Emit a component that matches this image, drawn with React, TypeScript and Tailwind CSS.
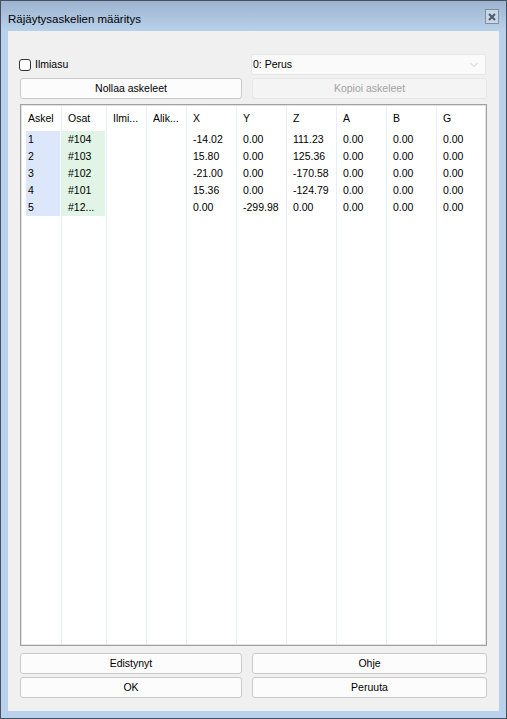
import { ChevronDown } from 'lucide-react'

const cols = [
  { name: 'Askel', w: 'w-[40px]' },
  { name: 'Osat', w: 'w-[45px]' },
  { name: 'Ilmi...', w: 'w-[40px]' },
  { name: 'Alik...', w: 'w-[40px]' },
  { name: 'X', w: 'w-[50px]' },
  { name: 'Y', w: 'w-[50px]' },
  { name: 'Z', w: 'w-[50px]' },
  { name: 'A', w: 'w-[50px]' },
  { name: 'B', w: 'w-[50px]' },
  { name: 'G', w: 'flex-1' },
]

const rows = [
  ['1', '#104', '', '', '-14.02', '0.00', '111.23', '0.00', '0.00', '0.00'],
  ['2', '#103', '', '', '15.80', '0.00', '125.36', '0.00', '0.00', '0.00'],
  ['3', '#102', '', '', '-21.00', '0.00', '-170.58', '0.00', '0.00', '0.00'],
  ['4', '#101', '', '', '15.36', '0.00', '-124.79', '0.00', '0.00', '0.00'],
  ['5', '#12...', '', '', '0.00', '-299.98', '0.00', '0.00', '0.00', '0.00'],
]

function Btn({ label, disabled, className }: { label: string; disabled?: boolean; className: string }) {
  return (
    <button
      className={`h-[21px] rounded-[3px] border leading-none ${className} ${
        disabled ? 'border-[#e6e6e6] bg-[#f4f4f4] text-[#a3a3a3]' : 'border-[#cacaca] bg-[#fcfcfc] text-black'
      }`}
    >
      {label}
    </button>
  )
}

export default function App() {
  return (
    <div
      className="w-[507px] h-[719px] border border-[#44525f] bg-[#b9d1ea] flex flex-col text-[10.5px] text-black"
      style={{ fontFamily: '"Liberation Sans", Arial, sans-serif' }}
    >
      {/* title bar */}
      <div className="h-[30px] flex items-start bg-gradient-to-b from-[#9cb4cf] to-[#b9d1ea]">
        <div className="flex-1 pl-[7px] pt-[11px] leading-[14px] text-[11.5px]">Räjäytysaskelien määritys</div>
        <div className="mt-[8px] mr-[7px] w-[14px] h-[15px] border border-[#7f8fa1] bg-[#c8d7e8] flex items-center justify-center">
          <svg width="8" height="8" viewBox="0 0 8 8">
            <path d="M1 1 L7 7 M7 1 L1 7" stroke="#4c5a6a" strokeWidth="2" />
          </svg>
        </div>
      </div>

      {/* client */}
      <div className="mx-[7px] w-[491px] h-[680px] bg-[#f0f0f0] flex flex-col px-[12px]">
        <div className="mt-[23px] h-[21px] flex items-center">
          <label className="w-[232px] -ml-[1px] flex items-center gap-[4px]">
            <span className="w-[12px] h-[12px] rounded-[3px] border border-[#333] bg-white" />
            <span>Ilmiasu</span>
          </label>
          <div className="w-[235px] h-[21px] rounded-[2px] border border-[#e6e6e6] bg-[#fafafa] flex items-center justify-between pl-[1px] pr-[5px]">
            <span>0: Perus</span>
            <ChevronDown size={12} strokeWidth={1.2} className="text-[#a8a8a8]" />
          </div>
        </div>

        <div className="mt-[3px] flex gap-[10px]">
          <Btn label="Nollaa askeleet" className="w-[222px]" />
          <Btn label="Kopioi askeleet" disabled className="w-[235px]" />
        </div>

        {/* steps table */}
        <div className="mt-[5px] h-[542px] w-[467px] border border-[#a0a0a0]">
          <div className="h-full border border-[#e3e3e3] bg-white flex">
            {cols.map((c, ci) => (
              <div
                key={c.name}
                className={`${c.w} h-full flex flex-col ${ci < cols.length - 1 ? 'border-r border-[#e6eefa]' : ''}`}
              >
                <div className="h-[25px] pt-[4px] pl-[6px] leading-[17px] whitespace-nowrap">{c.name}</div>
                {ci === 0 ? (
                  <div className="ml-[4px] mr-[1px] bg-[#dce7fb]">
                    {rows.map(r => (
                      <div key={r[0]} className="h-[17px] leading-[17px] pl-[2px]">{r[0]}</div>
                    ))}
                  </div>
                ) : ci === 1 ? (
                  <div className="mr-[1px] bg-[#e2f4e6]">
                    {rows.map(r => (
                      <div key={r[0]} className="h-[17px] leading-[17px] pl-[6px]">{r[1]}</div>
                    ))}
                  </div>
                ) : (
                  rows.map(r => (
                    <div key={r[0]} className="h-[17px] leading-[17px] pl-[6px] whitespace-nowrap">{r[ci]}</div>
                  ))
                )}
              </div>
            ))}
          </div>
        </div>

        <div className="mt-[7px] flex gap-[10px]">
          <Btn label="Edistynyt" className="w-[222px]" />
          <Btn label="Ohje" className="w-[235px]" />
        </div>
        <div className="mt-[3px] flex gap-[10px]">
          <Btn label="OK" className="w-[222px]" />
          <Btn label="Peruuta" className="w-[235px]" />
        </div>
      </div>
    </div>
  )
}
